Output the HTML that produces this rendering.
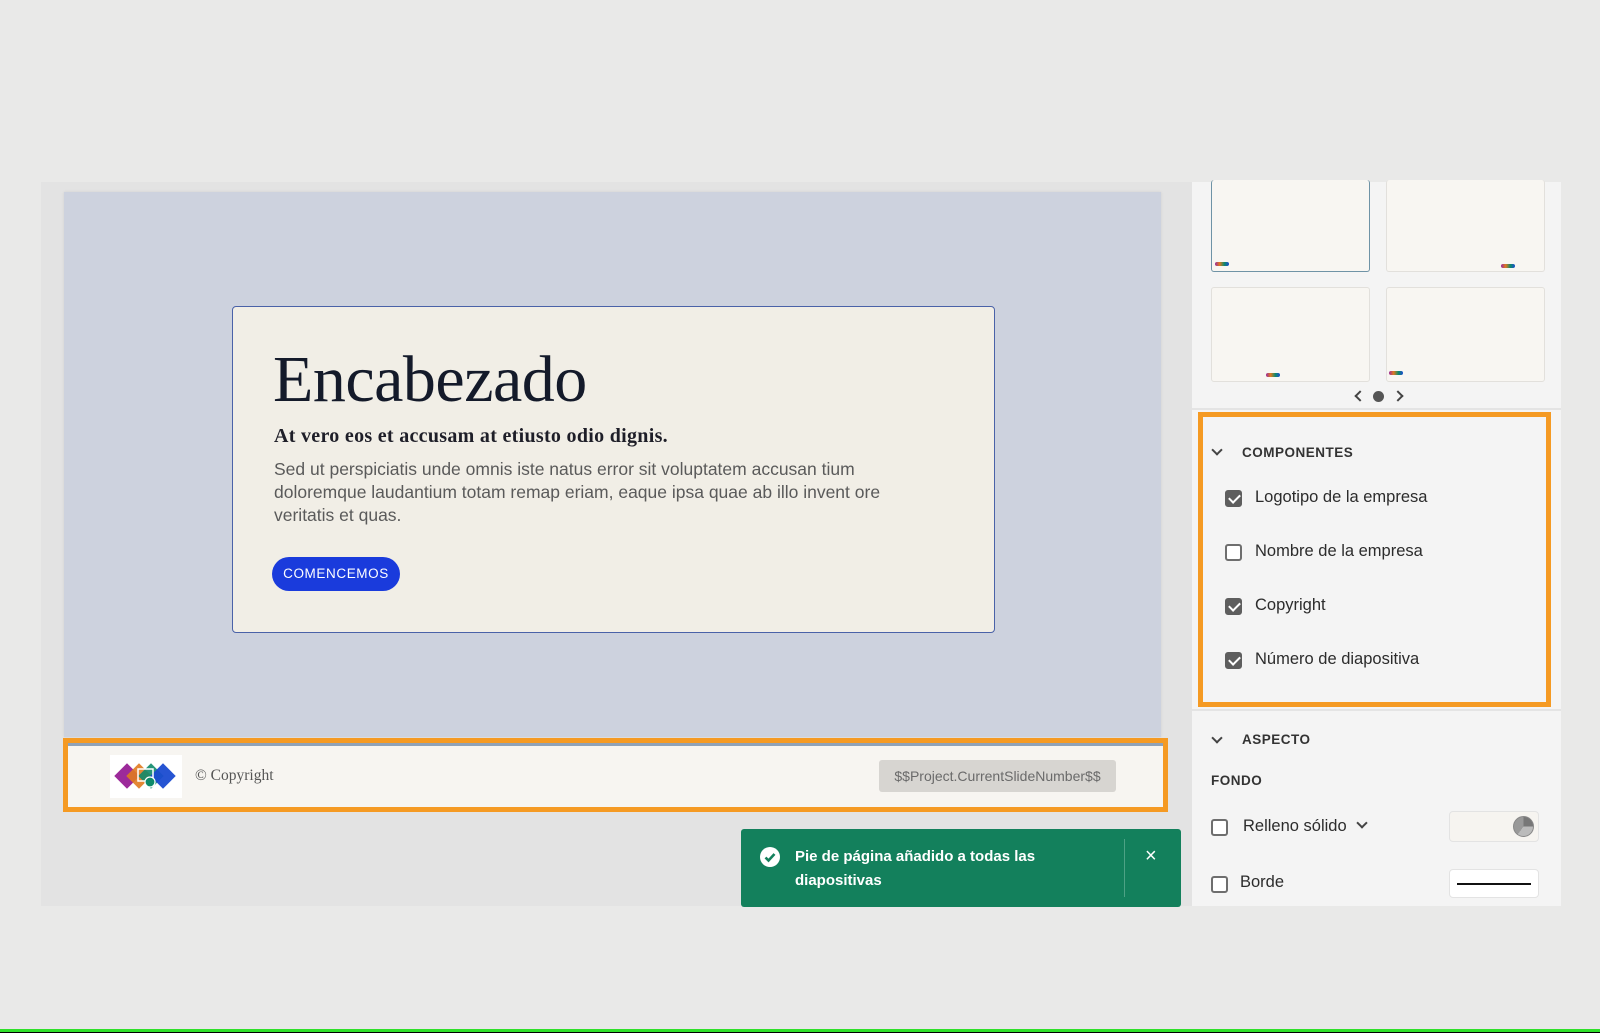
<!DOCTYPE html>
<html><head><meta charset="utf-8"><style>
*{margin:0;padding:0;box-sizing:border-box}
body{width:1600px;height:1033px;background:#e9e9e8;position:relative;overflow:hidden;font-family:"Liberation Sans",sans-serif}
.a{position:absolute}
.serif{font-family:"Liberation Serif",serif}
.cb{position:absolute;width:17px;height:17px;border:2px solid #6e6e6e;border-radius:3px;background:#fff}
.cb.on{background:#5e5e5e;border-color:#5e5e5e}
.cb.on::after{content:"";position:absolute;left:4px;top:0px;width:5px;height:9px;border:solid #fff;border-width:0 2px 2px 0;transform:rotate(45deg)}
.lbl{position:absolute;font-size:16.5px;color:#2c2c2c}
.hd{position:absolute;font-size:13.5px;font-weight:bold;letter-spacing:.5px;color:#333}
.chev{position:absolute;width:8px;height:8px;border:solid #444;border-width:0 2px 2px 0;transform:rotate(45deg)}
.th{position:absolute;background:#f8f6f2;border:1px solid #e2e0dc;border-radius:3px}
.tl{position:absolute;height:4px;width:14px;background:linear-gradient(90deg,#9b2a9b,#e07a1f,#0e8a6a,#1a4bd0);border-radius:2px}
</style></head><body>
<div class="a" style="left:41px;top:182px;width:1151px;height:724px;background:#e3e3e3"></div>
<div class="a" style="left:64px;top:192px;width:1097px;height:545px;background:#cdd2de;box-shadow:0 0 3px rgba(0,0,0,.08)"></div>
<div class="a" style="left:232px;top:306px;width:763px;height:327px;background:#f1eee6;border:1.5px solid #4a62a8;border-radius:4px"></div>
<div class="a serif" style="left:273px;top:342px;font-size:66px;color:#141a2a;letter-spacing:-0.5px">Encabezado</div>
<div class="a serif" style="left:274px;top:425px;font-size:20px;font-weight:bold;color:#1e1e28;letter-spacing:.3px">At vero eos et accusam at etiusto odio dignis.</div>
<div class="a" style="left:274px;top:458px;width:660px;font-size:17.5px;line-height:23px;color:#5a5a5a">Sed ut perspiciatis unde omnis iste natus error sit voluptatem accusan tium doloremque laudantium totam remap eriam, eaque ipsa quae ab illo invent ore veritatis et quas.</div>
<div class="a" style="left:272px;top:557px;width:128px;height:34px;background:#1a3bdc;border-radius:17px;color:#fff;font-size:13.5px;letter-spacing:.6px;text-align:center;line-height:34px">COMENCEMOS</div>
<div class="a" style="left:63px;top:738px;width:1105px;height:74px;border:5px solid #f59a23;background:#f7f5f1"></div>
<div class="a" style="left:68px;top:743px;width:1095px;height:3px;background:#8fa2b8"></div>
<div class="a" style="left:110px;top:755px;width:72px;height:43px;background:#fff"></div>
<svg class="a" style="left:112px;top:760px" width="68" height="34" viewBox="0 0 68 34"><g><rect x="6" y="7" width="18" height="18" fill="#9c2a9a" transform="rotate(45 15 16)"/><rect x="18" y="7" width="18" height="18" fill="#e07a1f" opacity=".9" transform="rotate(45 27 16)"/><rect x="30" y="7" width="18" height="18" fill="#0e8a6a" opacity=".9" transform="rotate(45 39 16)"/><rect x="42" y="7" width="18" height="18" fill="#1a4bd0" opacity=".95" transform="rotate(45 51 16)"/><rect x="26" y="9" width="15" height="12" fill="none" stroke="#fff" stroke-width="1.5"/><circle cx="38" cy="22" r="5" fill="#0e8a6a" stroke="#fff" stroke-width="1.2"/></g></svg>
<div class="a serif" style="left:195px;top:767px;font-size:15.5px;color:#555">© Copyright</div>
<div class="a" style="left:879px;top:760px;width:237px;height:32px;background:#d7d5d1;border-radius:3px;color:#6a6a6a;font-size:14px;line-height:32px;text-align:center">$$Project.CurrentSlideNumber$$</div>
<div class="a" style="left:741px;top:829px;width:440px;height:78px;background:#13805c;border-radius:3px"></div>
<svg class="a" style="left:760px;top:847px" width="20" height="20" viewBox="0 0 20 20"><circle cx="10" cy="10" r="10" fill="#fff"/><path d="M5.5 10.5l3 3 6-6.5" fill="none" stroke="#13805c" stroke-width="2.6"/></svg>
<div class="a" style="left:795px;top:845px;font-size:15px;font-weight:bold;color:#fff;line-height:24px">Pie de página añadido a todas las<br>diapositivas</div>
<div class="a" style="left:1124px;top:839px;width:1px;height:58px;background:#4da285"></div>
<div class="a" style="left:1145px;top:845px;font-size:20px;color:#fff">×</div>
<div class="a" style="left:1192px;top:182px;width:369px;height:724px;background:#f4f4f4"></div>
<div class="th" style="left:1211px;top:180px;width:159px;height:92px;border:1.5px solid #6f93a6;border-top:none"></div>
<div class="th" style="left:1386px;top:180px;width:159px;height:92px;border-top:none"></div>
<div class="th" style="left:1211px;top:287px;width:159px;height:95px"></div>
<div class="th" style="left:1386px;top:287px;width:159px;height:95px"></div>
<div class="tl" style="left:1215px;top:262px"></div><div class="tl" style="left:1501px;top:264px"></div><div class="tl" style="left:1266px;top:373px"></div><div class="tl" style="left:1389px;top:371px"></div>
<div class="chev" style="left:1356px;top:392px;transform:rotate(135deg)"></div>
<div class="a" style="left:1373px;top:391px;width:11px;height:11px;border-radius:50%;background:#555"></div>
<div class="chev" style="left:1394px;top:392px;transform:rotate(-45deg)"></div>
<div class="a" style="left:1192px;top:408px;width:369px;height:2px;background:#e4e4e4"></div>
<div class="a" style="left:1198px;top:412px;width:353px;height:295px;border:5px solid #f59a23"></div>
<div class="chev" style="left:1213px;top:446px"></div>
<div class="hd" style="left:1242px;top:445px">COMPONENTES</div>
<div class="cb on" style="left:1225px;top:490px"></div><div class="lbl" style="left:1255px;top:488px">Logotipo de la empresa</div>
<div class="cb" style="left:1225px;top:544px"></div><div class="lbl" style="left:1255px;top:542px">Nombre de la empresa</div>
<div class="cb on" style="left:1225px;top:598px"></div><div class="lbl" style="left:1255px;top:596px">Copyright</div>
<div class="cb on" style="left:1225px;top:652px"></div><div class="lbl" style="left:1255px;top:650px">Número de diapositiva</div>
<div class="a" style="left:1192px;top:709px;width:369px;height:2px;background:#e4e4e4"></div>
<div class="chev" style="left:1213px;top:734px"></div>
<div class="hd" style="left:1242px;top:732px">ASPECTO</div>
<div class="hd" style="left:1211px;top:773px">FONDO</div>
<div class="cb" style="left:1211px;top:819px"></div><div class="lbl" style="left:1243px;top:817px">Relleno sólido</div>
<div class="chev" style="left:1358px;top:819px"></div>
<div class="a" style="left:1449px;top:811px;width:90px;height:31px;background:#f6f4f0;border:1px solid #e3e3e3;border-radius:4px"></div>
<div class="a" style="left:1513px;top:816px;width:21px;height:21px;border-radius:50%;background:conic-gradient(#777 0 25%,#bbb 25% 60%,#999 60%);border:1px solid #888"></div>
<div class="cb" style="left:1211px;top:876px"></div><div class="lbl" style="left:1240px;top:873px">Borde</div>
<div class="a" style="left:1449px;top:869px;width:90px;height:29px;background:#fff;border:1px solid #e3e3e3;border-radius:4px"></div>
<div class="a" style="left:1457px;top:883px;width:74px;height:2px;background:#111"></div>
<div class="a" style="left:0;top:1029px;width:1600px;height:3px;background:#2fe02a"></div>
<div class="a" style="left:0;top:1032px;width:1600px;height:1px;background:#000"></div>
</body></html>
